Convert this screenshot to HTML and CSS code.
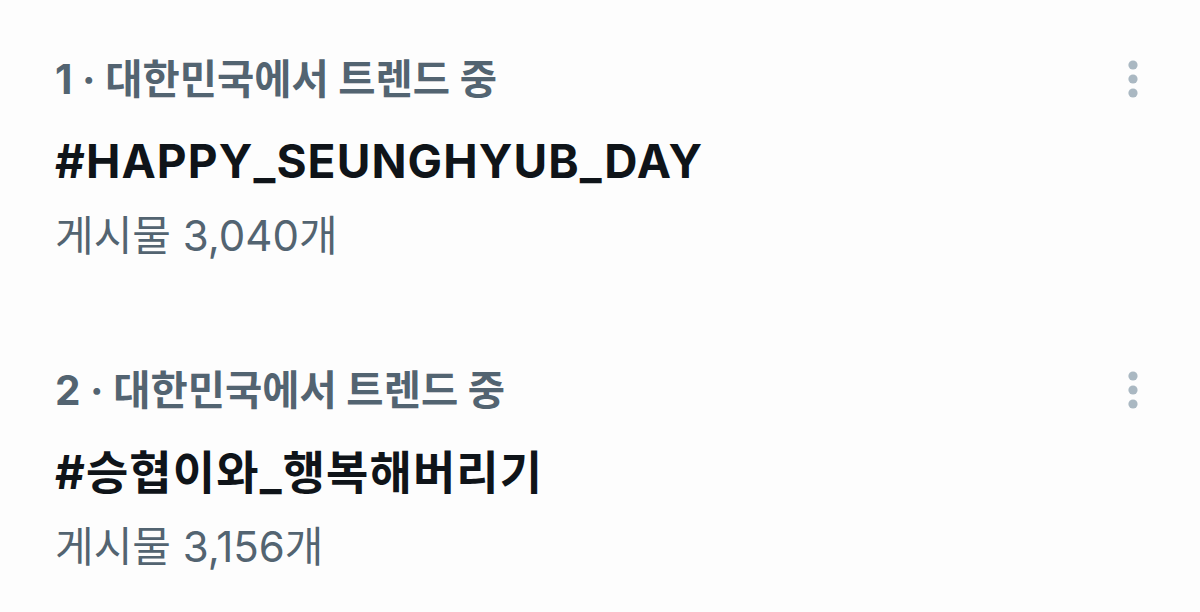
FILE: index.html
```html
<!DOCTYPE html>
<html lang="ko">

<head>
    <meta charset="UTF-8">
    <meta name="viewport" content="width=device-width, initial-scale=1.0">
    <title>트렌드</title>
    <link rel="stylesheet" href="styles.css">
</head>

<body>
    <div class="trends">
        <div class="trend">
            <div class="trend-text">
                <p class="trend-meta">1 · 대한민국에서 트렌드 중</p>
                <p class="trend-name">#HAPPY_SEUNGHYUB_DAY</p>
                <p class="trend-count">게시물 3,040개</p>
            </div>
            <button class="trend-more" aria-label="더 보기">
                <svg viewBox="0 0 10 40" width="10" height="40">
                    <circle cx="5" cy="6" r="4.6"></circle>
                    <circle cx="5" cy="20" r="4.6"></circle>
                    <circle cx="5" cy="34" r="4.6"></circle>
                </svg>
            </button>
        </div>

        <div class="trend">
            <div class="trend-text">
                <p class="trend-meta">2 · 대한민국에서 트렌드 중</p>
                <p class="trend-name">#승협이와_행복해버리기</p>
                <p class="trend-count">게시물 3,156개</p>
            </div>
            <button class="trend-more" aria-label="더 보기">
                <svg viewBox="0 0 10 40" width="10" height="40">
                    <circle cx="5" cy="6" r="4.6"></circle>
                    <circle cx="5" cy="20" r="4.6"></circle>
                    <circle cx="5" cy="34" r="4.6"></circle>
                </svg>
            </button>
        </div>
    </div>
</body>

</html>
```

FILE: styles.css
```css
* {
    box-sizing: border-box;
    margin: 0;
    padding: 0;
}

body {
    font-family: Inter, 'Noto Sans CJK KR', sans-serif;
    background-color: #fdfdfd;
    color: #0f1419;
}

.trends {
    display: flex;
    flex-direction: column;
    gap: 99px;
    padding: 52px 0 0 55px;
}

.trend {
    display: flex;
    justify-content: space-between;
    align-items: flex-start;
}

.trend-text {
    display: flex;
    flex-direction: column;
}

.trend-meta {
    font-size: 40.5px;
    font-weight: 700;
    line-height: 56px;
    margin-bottom: 23px;
    color: #536471;
}

.trend-name {
    font-size: 46px;
    font-weight: 700;
    letter-spacing: 1.1px;
    line-height: 60px;
    color: #0f1419;
}

.trend-count {
    font-size: 42px;
    line-height: 56px;
    margin-top: 17px;
    color: #536471;
}

.trend-more {
    border: none;
    background: none;
    margin: 7px 62px 0 0;
    fill: #aab8c2;
}
```
